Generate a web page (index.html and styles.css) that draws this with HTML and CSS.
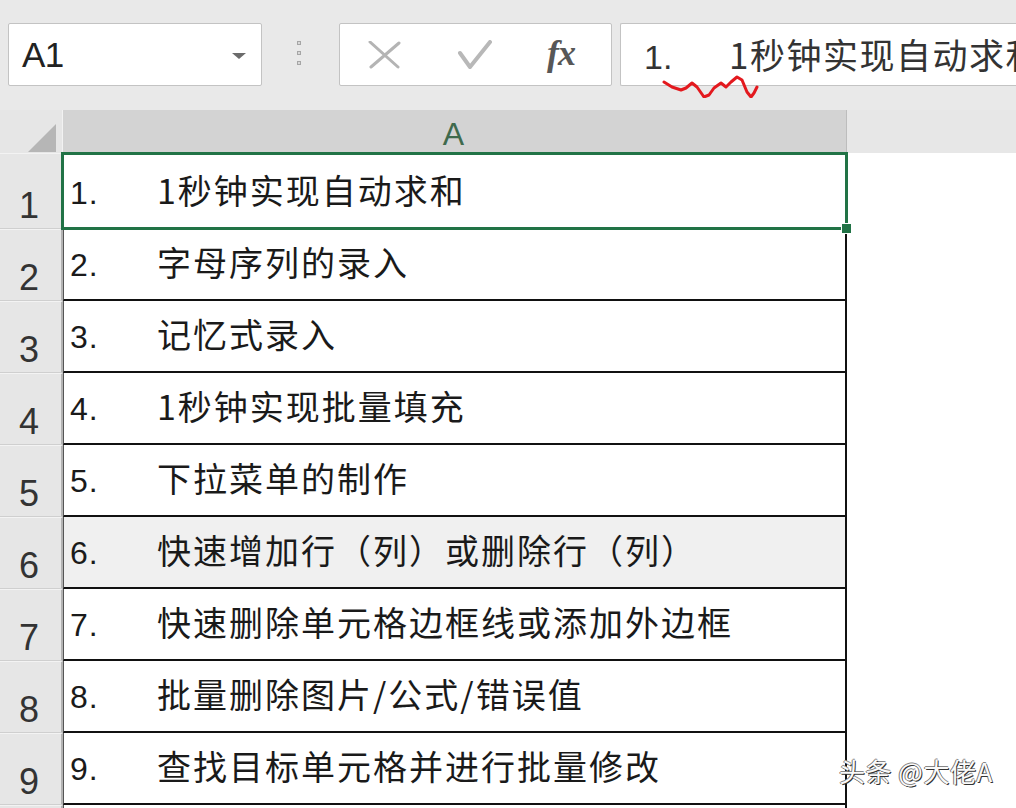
FILE: index.html
```html
<!DOCTYPE html>
<html lang="zh-CN">
<head>
<meta charset="utf-8">
<title>Excel</title>
<link rel="stylesheet" href="styles.css">
</head>
<body>
<div class="page">
  <div class="toolbar">
    <div class="namebox">
      <span class="nb-text">A1</span>
      <span class="nb-arrow"></span>
    </div>
    <div class="grip"><i></i><i></i><i></i></div>
    <div class="fbtns">
      <svg class="ico ico-x" width="34" height="30" viewBox="0 0 34 30"><path d="M2 1 L30 26 M31 2 L3 26" stroke="#b4b4b4" stroke-width="3" stroke-linecap="round" fill="none"/></svg>
      <svg class="ico ico-ok" width="36" height="32" viewBox="0 0 36 32"><path d="M3 13 L13 27 L33 2" stroke="#b8b8b8" stroke-width="4" stroke-linecap="round" stroke-linejoin="round" fill="none"/></svg>
      <span class="fx">fx</span>
    </div>
    <div class="finput">
      <span class="f-num">1.</span><span class="f-txt">1秒钟实现自动求和</span>
      <svg class="squiggle" width="100" height="24" viewBox="0 0 100 24"><path d="M3 8 L11 13 L20 16 L25 14 L31 9 L36 13 L43 23 L48 21 L53 14 L60 9 L65 13 L70 8 L76 3 L81 6 L86 18 L90 23 L93 19 L96 13" stroke="#e3191e" stroke-width="3" stroke-linecap="round" stroke-linejoin="round" fill="none"/></svg>
    </div>
  </div>

  <div class="sheet">
    <div class="hrow">
      <div class="corner"><span class="tri"></span></div>
      <div class="colhead">A</div>
      <div class="colrest"></div>
    </div>

    <div class="row row1">
      <div class="rh">1</div>
      <div class="cell sel"><span class="line"><span class="num">1.</span><span class="txt">1秒钟实现自动求和</span></span><span class="handle"></span></div>
      <div class="blank"></div>
    </div>
    <div class="row">
      <div class="rh">2</div>
      <div class="cell"><span class="line"><span class="num">2.</span><span class="txt">字母序列的录入</span></span></div>
      <div class="blank"></div>
    </div>
    <div class="row">
      <div class="rh">3</div>
      <div class="cell"><span class="line"><span class="num">3.</span><span class="txt">记忆式录入</span></span></div>
      <div class="blank"></div>
    </div>
    <div class="row">
      <div class="rh">4</div>
      <div class="cell"><span class="line"><span class="num">4.</span><span class="txt">1秒钟实现批量填充</span></span></div>
      <div class="blank"></div>
    </div>
    <div class="row">
      <div class="rh">5</div>
      <div class="cell"><span class="line"><span class="num">5.</span><span class="txt">下拉菜单的制作</span></span></div>
      <div class="blank"></div>
    </div>
    <div class="row hover">
      <div class="rh">6</div>
      <div class="cell"><span class="line"><span class="num">6.</span><span class="txt">快速增加行（列）或删除行（列）</span></span></div>
      <div class="blank"></div>
    </div>
    <div class="row">
      <div class="rh">7</div>
      <div class="cell"><span class="line"><span class="num">7.</span><span class="txt">快速删除单元格边框线或添加外边框</span></span></div>
      <div class="blank"></div>
    </div>
    <div class="row">
      <div class="rh">8</div>
      <div class="cell"><span class="line"><span class="num">8.</span><span class="txt">批量删除图片/公式/错误值</span></span></div>
      <div class="blank"></div>
    </div>
    <div class="row">
      <div class="rh">9</div>
      <div class="cell"><span class="line"><span class="num">9.</span><span class="txt">查找目标单元格并进行批量修改</span></span></div>
      <div class="blank"></div>
    </div>
    <div class="row">
      <div class="rh"></div>
      <div class="cell"></div>
      <div class="blank"></div>
    </div>
  </div>

  <div class="watermark">头条 @大佬A</div>
</div>
</body>
</html>
```

FILE: styles.css
```css
* { box-sizing: border-box; }
html, body { margin: 0; padding: 0; }
body {
  width: 1016px;
  height: 808px;
  overflow: hidden;
  background: #ffffff;
  font-family: "Noto Sans CJK SC", "Liberation Sans", sans-serif;
}
.page { position: relative; width: 1016px; height: 808px; overflow: hidden; }

/* ---------- toolbar ---------- */
.toolbar {
  height: 110px;
  background: #e9e9e9;
  display: flex;
  align-items: flex-start;
  padding: 23px 0 0 8px;
}
.namebox {
  width: 254px;
  height: 63px;
  background: #fff;
  border: 1px solid #c3c3c3;
  border-radius: 2px;
  display: flex;
  align-items: center;
  padding: 0 15px 0 13px;
}
.nb-text {
  font-family: "Liberation Sans", Arial, sans-serif;
  font-size: 35px;
  color: #222;
  flex: 1;
  letter-spacing: -0.5px;
}
.nb-arrow {
  width: 0; height: 0;
  border-left: 7px solid transparent;
  border-right: 7px solid transparent;
  border-top: 6px solid #6b6b6b;
  margin-top: 2px;
}
.grip {
  width: 6px;
  margin: 18px 0 0 35px;
  display: flex;
  flex-direction: column;
  gap: 6px;
}
.grip i {
  display: block;
  width: 4px; height: 4px;
  border: 1px solid #a6a6a6;
  background: #d8d8d8;
}
.fbtns {
  margin-left: 36px;
  width: 273px;
  height: 63px;
  background: #fff;
  border: 1px solid #c3c3c3;
  border-radius: 2px;
  display: flex;
  align-items: center;
}
.ico { display: block; }
.ico-x { margin-left: 28px; margin-top: 2px; }
.ico-ok { margin-left: 55px; margin-top: 2px; }
.fx {
  margin-left: 54px;
  font-family: "Liberation Serif", "DejaVu Serif", serif;
  font-style: italic;
  font-weight: bold;
  font-size: 36px;
  color: #575757;
  letter-spacing: -1px;
  margin-top: -4px;
}
.finput {
  position: relative;
  margin-left: 8px;
  flex: 1;
  min-width: 0;
  height: 63px;
  background: #fff;
  border: 1px solid #c3c3c3;
  border-right: none;
  border-radius: 2px 0 0 2px;
  padding-left: 23px;
  line-height: 60px;
  color: #333;
  white-space: nowrap;
}
.f-num { display: inline-block; width: 85px; font-family: "Liberation Sans", sans-serif; font-size: 34px; }
.f-txt { font-family: "Noto Sans CJK SC", sans-serif; font-size: 35px; letter-spacing: 1.5px; }
.squiggle { position: absolute; left: 40px; top: 50px; }

/* ---------- sheet ---------- */
.sheet { display: flex; flex-direction: column; }
.hrow {
  display: grid;
  grid-template-columns: 63px 784px 1fr;
  height: 43px;
}
.corner {
  background: #e6e6e6;
  border-right: 1px solid #f2f2f2;
  display: flex;
  justify-content: flex-end;
  align-items: flex-end;
  padding: 0 6px 6px 0;
}
.tri {
  width: 0; height: 0;
  border-left: 28px solid transparent;
  border-bottom: 28px solid #b6b6b6;
}
.colhead {
  background: #d3d3d3;
  border-right: 1px solid #bdbdbd;
  font-family: "Liberation Sans", sans-serif;
  font-size: 32px;
  color: #3f6a4d;
  text-align: center;
  line-height: 48px;
  padding-right: 2px;
}
.colrest {
  background: #e7e7e7;
  border-bottom: 2px solid #8c8c8c;
}

.row {
  display: grid;
  grid-template-columns: 63px 784px 1fr;
  grid-template-rows: minmax(0, 1fr);
  height: 72px;
  flex: none;
}
.row1 { height: 76px; position: relative; z-index: 1; }
.rh {
  background: #e6e6e6;
  border-right: 2px solid #b3b3b3;
  border-bottom: 1px solid #cfcfcf;
  border-top: 1px solid #f3f3f3;
  font-family: "Liberation Sans", sans-serif;
  font-size: 36px;
  color: #333;
  display: flex;
  justify-content: center;
  align-items: flex-end;
  padding: 0 3px 4px 0;
  line-height: 1;
  overflow: hidden;
}
.cell {
  position: relative;
  background: #fff;
  border-right: 2px solid #111;
  border-bottom: 2px solid #111;
  border-left: 1px solid #555;
  padding: 2px 0 0 6px;
  display: flex;
  align-items: center;
  white-space: nowrap;
  color: #1a1a1a;
  min-height: 0;
}
.row1 .cell { padding-top: 6px; }
.line { display: block; line-height: 44px; }
.num {
  display: inline-block;
  width: 87px;
  font-family: "Liberation Sans", sans-serif;
  font-size: 32px;
  letter-spacing: 1px;
}
.txt {
  font-family: "Noto Sans CJK SC", sans-serif;
  font-size: 34px;
  letter-spacing: 2px;
}
.blank { background: #fff; }
.hover .cell { background: #f0f0f0; }

.sel::after {
  content: "";
  position: absolute;
  left: -3px; top: -1px; right: -3px; bottom: -3px;
  border: 3px solid #217346;
  pointer-events: none;
}
.sel { border-bottom-color: #217346; }
.handle {
  position: absolute;
  right: -7px;
  bottom: -7px;
  width: 11px;
  height: 11px;
  background: #217346;
  border: 1px solid #fff;
  z-index: 2;
}

.watermark {
  position: absolute;
  left: 839px;
  top: 752px;
  font-family: "Noto Sans CJK SC", sans-serif;
  font-size: 26px;
  color: #fafafa;
  letter-spacing: 0.5px;
  text-shadow: 1px 1px 0 #333, -1px 0 0 #777, 0 -1px 0 #888;
}
```
